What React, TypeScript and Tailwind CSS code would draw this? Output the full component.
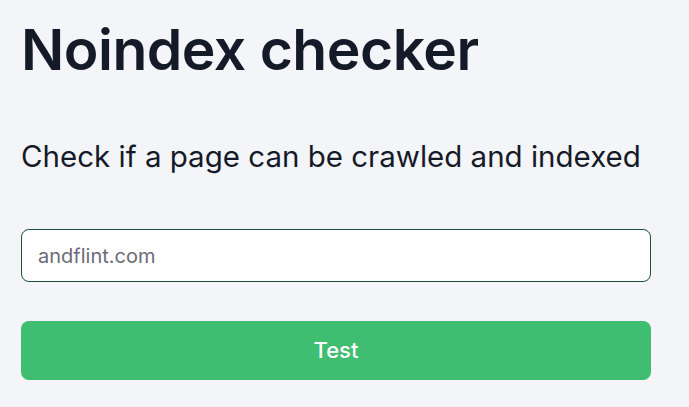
import { useState } from "react";

export default function App() {
  const [url, setUrl] = useState("andflint.com");

  return (
    <div className="min-h-[407px] w-full bg-[#f4f5f9] font-['Inter',sans-serif]">
      <div className="px-[21px] pt-[18px] pb-[27px] w-[672px]">
        <h1 className="text-[57px] leading-[64px] font-semibold tracking-[-0.5px] text-[#151a28]">
          Noindex checker
        </h1>
        <p className="mt-[57px] text-[29.5px] leading-[34px] text-[#151a28]">
          Check if a page can be crawled and indexed
        </p>
        <input
          autoFocus
          className="mt-[56px] block w-[630px] h-[53px] rounded-[8px] border border-[#1d4d3e] bg-white px-[16px] text-[20px] text-[#6b6a78] caret-[#1d4d3e] outline-none"
          value={url}
          onChange={(e) => setUrl(e.target.value)}
        />
        <button className="mt-[39px] block w-[630px] h-[59px] rounded-[8px] bg-[#3fbd71] text-[22px] font-medium text-white">
          Test
        </button>
      </div>
    </div>
  );
}
